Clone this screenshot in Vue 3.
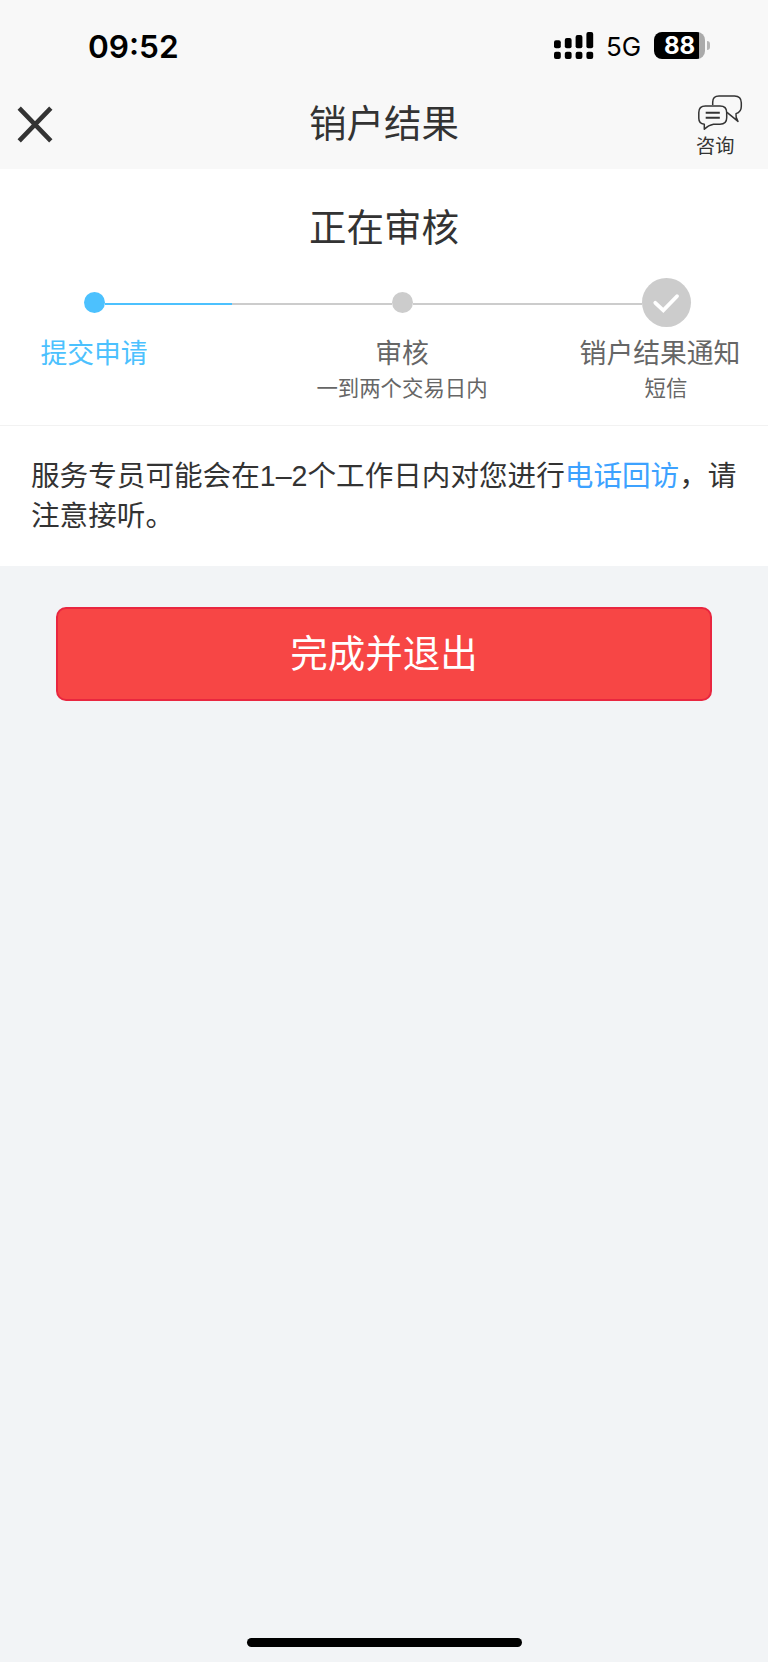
<template>
  <div class="page">
    <header class="header">
      <div class="status-bar">
        <span class="time">09:52</span>
        <div class="status-right">
          <svg class="signal" viewBox="0 0 40 28" width="40" height="28">
            <rect
              v-for="(bar, i) in signalBars"
              :key="'bar' + i"
              :x="bar.x"
              :y="bar.y"
              width="6.8"
              :height="16.2 - bar.y"
              rx="2"
            />
            <rect
              v-for="(bar, i) in signalBars"
              :key="'dot' + i"
              :x="bar.x"
              y="19.7"
              width="6.8"
              height="7.2"
              rx="2"
            />
          </svg>
          <span class="network">5G</span>
          <div class="battery">
            <span class="battery-text">88</span>
          </div>
          <span class="battery-cap"></span>
        </div>
      </div>
      <div class="nav-bar">
        <svg class="close" viewBox="0 0 36 38" width="36" height="38">
          <path d="M2.2 2.2L33.8 34.8M33.8 2.2L2.2 34.8" fill="none" stroke="#333" stroke-width="4.6" />
        </svg>
        <h1 class="title">销户结果</h1>
        <div class="consult">
          <svg class="chat" viewBox="0 0 46 36" width="46" height="36">
            <g fill="none" stroke="#333" stroke-width="1.5" stroke-linejoin="round">
              <path d="M15.7 11V8.2Q15.7 2 22 2H37.5Q44.3 2 44.3 8.8V12.5Q44.3 18 39 19.6Q38.4 23.5 41 27.4L30 18.3" />
              <path d="M8.5 12H23Q29.7 12 29.7 18.5V23.8Q29.7 30.2 23 30.2H16.5Q11.5 31 7.3 35.2V30.3Q1.8 29.6 1.8 24.2V18.5Q1.8 12 8.5 12Z" />
              <path d="M8.7 18.7H22.8M8.7 23.7H22.8" stroke-width="1.9" />
            </g>
          </svg>
          <span class="consult-text">咨询</span>
        </div>
      </div>
    </header>

    <section class="progress">
      <h2 class="progress-title">正在审核</h2>
      <div class="track">
        <i class="dot dot-active"></i>
        <i class="line line-active"></i>
        <i class="line line-half"></i>
        <i class="dot"></i>
        <i class="line line-last"></i>
        <i class="check">
          <svg viewBox="0 0 49 49" width="49" height="49">
            <path d="M13.3 24.8L21.3 32.3L35 18.2" fill="none" stroke="#fff" stroke-width="3.8" stroke-linecap="round" stroke-linejoin="miter" />
          </svg>
        </i>
      </div>
      <ul class="steps">
        <li v-for="step in steps" :key="step.name" class="step" :class="{ active: step.active }">
          <p class="step-name">{{ step.name }}</p>
          <p v-if="step.desc" class="step-desc">{{ step.desc }}</p>
        </li>
      </ul>
    </section>

    <p class="notice">服务专员可能会在1–2个工作日内对您进行<a class="link">电话回访</a>，请注意接听。</p>

    <main class="main">
      <button type="button" class="submit">完成并退出</button>
    </main>

    <div class="home-bar"></div>
  </div>
</template>

<script setup>
import { ref } from 'vue'

// 审核进度
const steps = ref([
  { name: '提交申请', desc: '', active: true },
  { name: '审核', desc: '一到两个交易日内', active: false },
  { name: '销户结果通知', desc: '短信', active: false }
])

// 双卡信号
const signalBars = [
  { x: 0, y: 8.2 },
  { x: 10.8, y: 6 },
  { x: 21.6, y: 3 },
  { x: 32.4, y: 0 }
]
</script>

<style>
body {
  margin: 0;
  background-color: #f2f4f6;
}
</style>

<style scoped>
.page {
  display: flex;
  flex-direction: column;
  width: 768px;
  height: 1662px;
  overflow: hidden;
  background-color: #f2f4f6;
  color: #333;
  font-family: 'Liberation Sans', 'Noto Sans CJK SC', sans-serif;
}
h1,
h2,
p,
ul {
  margin: 0;
  padding: 0;
  font-weight: 400;
}
svg {
  display: block;
}
.header {
  height: 169px;
  background-color: #f8f8f8;
}
.status-bar {
  display: flex;
  justify-content: space-between;
  align-items: center;
  height: 92px;
  padding: 0 58px 0 88px;
  box-sizing: border-box;
  color: #000;
  font-family: Inter, sans-serif;
}
.time {
  padding-top: 2px;
  font-size: 31.6px;
  font-weight: 600;
  line-height: 40px;
}
.status-right {
  display: flex;
  align-items: center;
}
.network {
  margin-left: 12px;
  width: 37px;
  padding-top: 2px;
  font-size: 26px;
  line-height: 28px;
  white-space: nowrap;
}
.battery {
  display: flex;
  align-items: center;
  justify-content: center;
  width: 51px;
  height: 27px;
  margin: 0 0 1px 11px;
  border-radius: 8px;
  background: linear-gradient(to right, #000 45px, #aaa 45px);
}
.battery-text {
  color: #fff;
  font-size: 24px;
  font-weight: 700;
  line-height: 27px;
}
.battery-cap {
  width: 3px;
  height: 9px;
  margin: 0 0 1px 2px;
  border-radius: 0 4px 4px 0;
  background-color: #b5b5b5;
}
.nav-bar {
  display: grid;
  grid-template-columns: 100px 1fr 100px;
  height: 77px;
}
.close {
  margin: 14px 0 0 17px;
}
.title {
  padding-top: 1px;
  font-size: 37.5px;
  line-height: 62px;
  text-align: center;
}
.consult {
  display: flex;
  flex-direction: column;
  padding-left: 28px;
}
.chat {
  margin: 2px 0 0 1px;
}
.consult-text {
  margin-top: 6px;
  font-size: 19.2px;
  line-height: 22px;
}
.progress {
  height: 257px;
  box-sizing: border-box;
  border-bottom: 1px solid #f2f2f2;
  background-color: #fff;
}
.progress-title {
  padding-top: 28px;
  font-size: 37.5px;
  line-height: 62px;
  text-align: center;
}
.track {
  display: flex;
  align-items: center;
  height: 49px;
  margin-top: 19px;
  padding-left: 84px;
}
.dot {
  width: 21px;
  height: 21px;
  border-radius: 50%;
  background-color: #ccc;
}
.dot-active {
  background-color: #4cc1fe;
}
.line {
  height: 2px;
  margin-top: 2px;
  background-color: #ccc;
}
.line-active {
  width: 127px;
  background-color: #4cc1fe;
}
.line-half {
  width: 160px;
}
.line-last {
  width: 229px;
}
.check {
  width: 49px;
  height: 49px;
  border-radius: 50%;
  background-color: #ccc;
}
.steps {
  display: grid;
  grid-template-columns: 188px 376px 204px;
  margin-top: 9px;
  list-style: none;
  color: #666;
  text-align: center;
}
.step:nth-child(2) {
  padding-left: 52px;
}
.step-name {
  font-size: 26.8px;
  line-height: 36px;
}
.step:last-child .step-name {
  padding-right: 12px;
}
.step-desc {
  font-size: 21.4px;
  line-height: 35px;
}
.active {
  color: #4cc1fe;
}
.notice {
  height: 140px;
  padding: 30px 30px 0 31px;
  box-sizing: border-box;
  background-color: #fff;
  font-size: 28.6px;
  line-height: 40px;
}
.link {
  color: #3da2ff;
}
.main {
  flex: 1;
  padding: 41px 56px 0;
}
.submit {
  display: block;
  width: 100%;
  height: 94px;
  padding: 0;
  border: 2px solid #e9263f;
  border-radius: 10px;
  background-color: #f74645;
  color: #fff;
  font-family: inherit;
  font-size: 37.5px;
  line-height: 56px;
}
.home-bar {
  width: 275px;
  height: 9px;
  margin: 0 auto 15px;
  border-radius: 5px;
  background-color: #000;
}
</style>
